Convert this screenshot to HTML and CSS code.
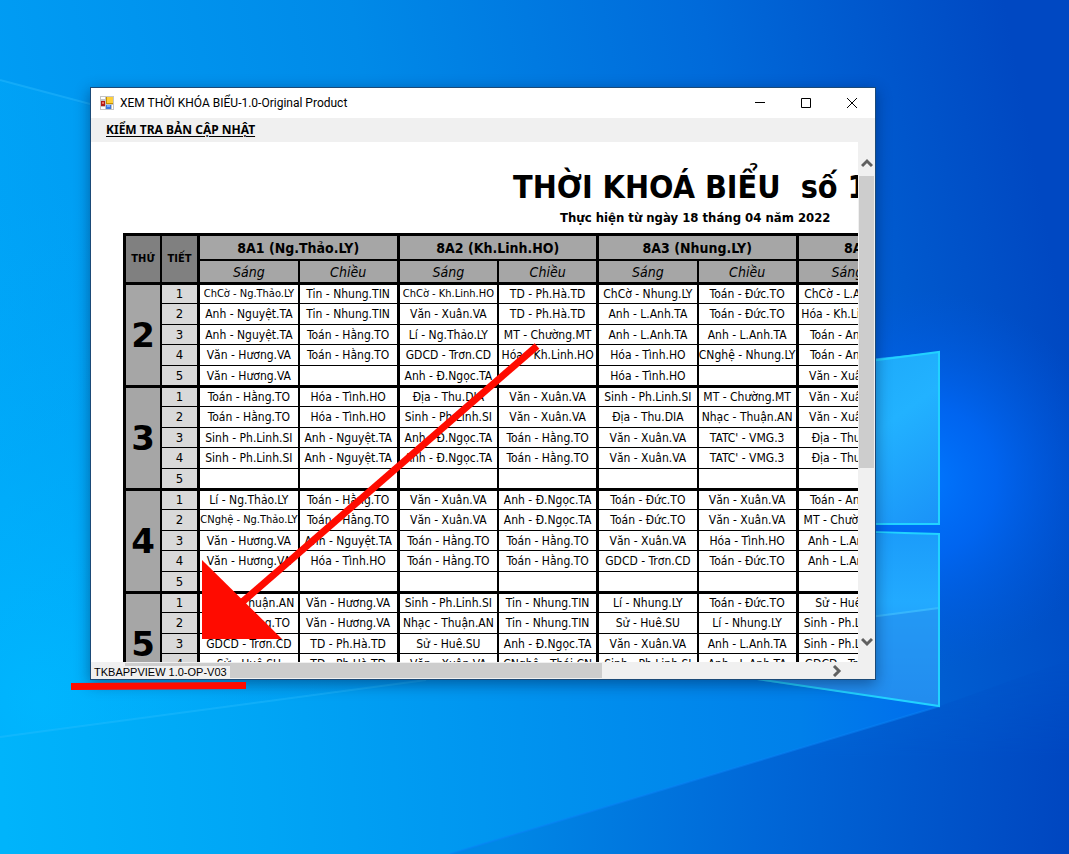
FILE: index.html
```html
<!DOCTYPE html>
<html lang="vi">
<head>
<meta charset="utf-8">
<title>XEM THỜI KHÓA BIỂU-1.0-Original Product</title>
<link rel="stylesheet" href="styles.css">
</head>
<body>
<div class="desktop">
  <svg class="wallpaper" viewBox="0 0 1069 854" preserveAspectRatio="none" aria-hidden="true">
    <defs>
      <linearGradient id="base" x1="0" y1="0.55" x2="1" y2="0.4">
        <stop offset="0" stop-color="#00a0f6"/><stop offset="0.4" stop-color="#008ae8"/><stop offset="0.72" stop-color="#006ada"/><stop offset="1" stop-color="#0048c2"/>
      </linearGradient>
      <radialGradient id="lowleft" gradientUnits="userSpaceOnUse" cx="40" cy="700" r="520">
        <stop offset="0" stop-color="#00b8ff" stop-opacity="0.9"/><stop offset="1" stop-color="#00a4f6" stop-opacity="0"/>
      </radialGradient>
      <radialGradient id="glow" gradientUnits="userSpaceOnUse" cx="920" cy="480" r="190">
        <stop offset="0" stop-color="#0078ff"/><stop offset="0.4" stop-color="#0068f8" stop-opacity="0.8"/><stop offset="1" stop-color="#0058e0" stop-opacity="0"/>
      </radialGradient>
      <linearGradient id="floor" gradientUnits="userSpaceOnUse" x1="0" y1="760" x2="940" y2="706">
        <stop offset="0" stop-color="#00b4fb"/><stop offset="0.28" stop-color="#00a5f5"/><stop offset="0.6" stop-color="#0090ee"/><stop offset="0.85" stop-color="#0080ea"/><stop offset="1" stop-color="#006cec"/>
      </linearGradient>
      <linearGradient id="wedge" gradientUnits="userSpaceOnUse" x1="500" y1="800" x2="1069" y2="830">
        <stop offset="0" stop-color="#0088e6"/><stop offset="0.45" stop-color="#0068d8"/><stop offset="1" stop-color="#0046c0"/>
      </linearGradient>
      <linearGradient id="wedgefade" x1="0" y1="0" x2="0" y2="1">
        <stop offset="0" stop-color="#fff" stop-opacity="0"/><stop offset="0.5" stop-color="#fff"/>
      </linearGradient>
      <mask id="wedgemask"><rect x="440" y="660" width="629" height="194" fill="url(#wedgefade)"/></mask>
      <linearGradient id="pane" x1="0" y1="0" x2="1" y2="1">
        <stop offset="0" stop-color="#179ef2"/><stop offset="0.6" stop-color="#22b2ff"/><stop offset="1" stop-color="#1a92f8"/>
      </linearGradient>
      <linearGradient id="pane2" x1="0" y1="0" x2="0" y2="1">
        <stop offset="0" stop-color="#1b9cfa"/><stop offset="0.4" stop-color="#22aaff"/><stop offset="1" stop-color="#2088f0"/>
      </linearGradient>
      <linearGradient id="beam" x1="0" y1="0" x2="1" y2="0">
        <stop offset="0" stop-color="#00b8ff" stop-opacity="0.5"/><stop offset="1" stop-color="#0090f0" stop-opacity="0.1"/>
      </linearGradient>
    </defs>
    <rect width="1069" height="854" fill="url(#base)"/>
    <rect width="1069" height="854" fill="url(#lowleft)"/>
    <path d="M0 80 L870 330 L870 620 L0 738Z" fill="url(#beam)" opacity="0.4"/>
    <path d="M0 737 L426 680 L520 640 L940 706 L450 854 L0 854Z" fill="url(#floor)"/>
    <path d="M0 737 L426 680" stroke="#30c0ff" stroke-width="2" opacity="0.35"/>
    <path d="M0 80 L120 112" stroke="#30c0ff" stroke-width="2" opacity="0.4"/>
    <path d="M940 706 L1069 660 L1069 854 L450 854Z" fill="url(#wedge)" mask="url(#wedgemask)"/>
    <path d="M940 706 L450 854" stroke="#0a84f6" stroke-width="2" opacity="0.5"/>
    <rect width="1069" height="854" fill="url(#glow)"/>
    <path d="M700 376 L939 352 L939 524 L700 524Z" fill="url(#pane)"/>
    <path d="M700 532 L939 534 L939 706 L700 672Z" fill="url(#pane2)"/>
    <path d="M875 616 L939 608 L939 706 L700 672Z" fill="#2590ee" opacity="0.6"/>
    <path d="M870 617 L939 608" stroke="#40c0ff" stroke-width="2" opacity="0.7"/>
    <g fill="none" stroke="#22d2ff" stroke-width="2">
      <path d="M870 361 L939 352 L939 524 L870 524"/>
      <path d="M870 532 L939 534 L939 706 L750 678"/>
    </g>
  </svg>

  <main class="window">
    <header class="titlebar">
      <svg class="app-icon" viewBox="0 0 14 14" aria-hidden="true">
        <rect width="14" height="14" fill="#c4c4c4"/><path d="M1 1H5V3H1ZM1 11H5V13H1ZM12 9H13V13H12Z" fill="#fff"/>
        <rect x="6" y="1" width="7" height="7" fill="#c49000"/><rect x="7" y="1" width="6" height="6" fill="#ffcf38"/>
        <rect x="1" y="5" width="4" height="5" fill="#b01c18"/><rect x="2" y="6" width="2" height="2" fill="#f07060"/>
        <rect x="6" y="9" width="5" height="4" fill="#3a78e0"/><rect x="7" y="9" width="3" height="2" fill="#78aaff"/>
      </svg>
      <h1 class="caption">XEM THỜI KHÓA BIỂU-1.0-Original Product</h1>
      <button class="win-btn" aria-label="Minimize"><svg viewBox="0 0 10 10"><path d="M0 4.5H10"/></svg></button>
      <button class="win-btn" aria-label="Maximize"><svg viewBox="0 0 10 10"><path d="M.5 .5H9.5V9.5H.5Z"/></svg></button>
      <button class="win-btn" aria-label="Close"><svg viewBox="0 0 10 10"><path d="M0 0L10 10M10 0L0 10"/></svg></button>
    </header>
    <nav class="menubar"><a href="#update">KIỂM TRA BẢN CẬP NHẬT</a></nav>
    <div class="content">
      <section class="sheet">
        <h2 class="title">THỜI KHOÁ BIỂU  số 1</h2>
        <p class="subtitle">Thực hiện từ ngày 18 tháng 04 năm 2022</p>
        <table class="timetable">
          <colgroup><col class="c-day"><col class="c-period"><col><col><col><col><col><col><col><col></colgroup>
          <thead>
            <tr class="classes"><th rowspan="2" class="corner">THỨ</th><th rowspan="2" class="corner period-head">TIẾT</th><th colspan="2">8A1 (Ng.Thảo.LY)</th><th colspan="2">8A2 (Kh.Linh.HO)</th><th colspan="2">8A3 (Nhung.LY)</th><th colspan="2">8A4 (L.Anh.TA)</th></tr>
            <tr class="sessions"><th>Sáng</th><th>Chiều</th><th>Sáng</th><th>Chiều</th><th>Sáng</th><th>Chiều</th><th>Sáng</th><th>Chiều</th></tr>
          </thead>
          <tbody>
            <tr><th rowspan="5" class="day">2</th><th>1</th><td class="tight">ChCờ - Ng.Thảo.LY</td><td>Tin - Nhung.TIN</td><td class="tight">ChCờ - Kh.Linh.HO</td><td>TD - Ph.Hà.TD</td><td>ChCờ - Nhung.LY</td><td>Toán - Đức.TO</td><td>ChCờ - L.Anh.TA</td><td></td></tr>
            <tr><th>2</th><td>Anh - Nguyệt.TA</td><td>Tin - Nhung.TIN</td><td>Văn - Xuân.VA</td><td>TD - Ph.Hà.TD</td><td>Anh - L.Anh.TA</td><td>Toán - Đức.TO</td><td>Hóa - Kh.Linh.HO</td><td></td></tr>
            <tr><th>3</th><td>Anh - Nguyệt.TA</td><td>Toán - Hằng.TO</td><td>Lí - Ng.Thảo.LY</td><td>MT - Chường.MT</td><td>Anh - L.Anh.TA</td><td>Anh - L.Anh.TA</td><td>Toán - Anh.TO</td><td></td></tr>
            <tr><th>4</th><td>Văn - Hương.VA</td><td>Toán - Hằng.TO</td><td>GDCD - Trơn.CD</td><td>Hóa - Kh.Linh.HO</td><td>Hóa - Tình.HO</td><td>CNghệ - Nhung.LY</td><td>Toán - Anh.TO</td><td></td></tr>
            <tr><th>5</th><td>Văn - Hương.VA</td><td></td><td>Anh - Đ.Ngọc.TA</td><td></td><td>Hóa - Tình.HO</td><td></td><td>Văn - Xuân.VA</td><td></td></tr>
          </tbody>
          <tbody>
            <tr><th rowspan="5" class="day">3</th><th>1</th><td>Toán - Hằng.TO</td><td>Hóa - Tình.HO</td><td>Địa - Thu.DIA</td><td>Văn - Xuân.VA</td><td>Sinh - Ph.Linh.SI</td><td>MT - Chường.MT</td><td>Văn - Xuân.VA</td><td></td></tr>
            <tr><th>2</th><td>Toán - Hằng.TO</td><td>Hóa - Tình.HO</td><td>Sinh - Ph.Linh.SI</td><td>Văn - Xuân.VA</td><td>Địa - Thu.DIA</td><td>Nhạc - Thuận.AN</td><td>Văn - Xuân.VA</td><td></td></tr>
            <tr><th>3</th><td>Sinh - Ph.Linh.SI</td><td>Anh - Nguyệt.TA</td><td>Anh - Đ.Ngọc.TA</td><td>Toán - Hằng.TO</td><td>Văn - Xuân.VA</td><td>TATC' - VMG.3</td><td>Địa - Thu.DIA</td><td></td></tr>
            <tr><th>4</th><td>Sinh - Ph.Linh.SI</td><td>Anh - Nguyệt.TA</td><td>Anh - Đ.Ngọc.TA</td><td>Toán - Hằng.TO</td><td>Văn - Xuân.VA</td><td>TATC' - VMG.3</td><td>Địa - Thu.DIA</td><td></td></tr>
            <tr><th>5</th><td></td><td></td><td></td><td></td><td></td><td></td><td></td><td></td></tr>
          </tbody>
          <tbody>
            <tr><th rowspan="5" class="day">4</th><th>1</th><td>Lí - Ng.Thảo.LY</td><td>Toán - Hằng.TO</td><td>Văn - Xuân.VA</td><td>Anh - Đ.Ngọc.TA</td><td>Toán - Đức.TO</td><td>Văn - Xuân.VA</td><td>Toán - Anh.TO</td><td></td></tr>
            <tr><th>2</th><td class="tight">CNghệ - Ng.Thảo.LY</td><td>Toán - Hằng.TO</td><td>Văn - Xuân.VA</td><td>Anh - Đ.Ngọc.TA</td><td>Toán - Đức.TO</td><td>Văn - Xuân.VA</td><td>MT - Chường.MT</td><td></td></tr>
            <tr><th>3</th><td>Văn - Hương.VA</td><td>Anh - Nguyệt.TA</td><td>Toán - Hằng.TO</td><td>Toán - Hằng.TO</td><td>Văn - Xuân.VA</td><td>Hóa - Tình.HO</td><td>Anh - L.Anh.TA</td><td></td></tr>
            <tr><th>4</th><td>Văn - Hương.VA</td><td>Hóa - Tình.HO</td><td>Toán - Hằng.TO</td><td>Toán - Hằng.TO</td><td>GDCD - Trơn.CD</td><td>Toán - Đức.TO</td><td>Anh - L.Anh.TA</td><td></td></tr>
            <tr><th>5</th><td></td><td></td><td></td><td></td><td></td><td></td><td></td><td></td></tr>
          </tbody>
          <tbody>
            <tr><th rowspan="5" class="day">5</th><th>1</th><td>Nhạc - Thuận.AN</td><td>Văn - Hương.VA</td><td>Sinh - Ph.Linh.SI</td><td>Tin - Nhung.TIN</td><td>Lí - Nhung.LY</td><td>Toán - Đức.TO</td><td>Sử - Huê.SU</td><td></td></tr>
            <tr><th>2</th><td>Toán - Hằng.TO</td><td>Văn - Hương.VA</td><td>Nhạc - Thuận.AN</td><td>Tin - Nhung.TIN</td><td>Sử - Huê.SU</td><td>Lí - Nhung.LY</td><td>Sinh - Ph.Linh.SI</td><td></td></tr>
            <tr><th>3</th><td>GDCD - Trơn.CD</td><td>TD - Ph.Hà.TD</td><td>Sử - Huê.SU</td><td>Anh - Đ.Ngọc.TA</td><td>Văn - Xuân.VA</td><td>Anh - L.Anh.TA</td><td>Sinh - Ph.Linh.SI</td><td></td></tr>
            <tr><th>4</th><td>Sử - Huê.SU</td><td>TD - Ph.Hà.TD</td><td>Văn - Xuân.VA</td><td>CNghệ - Thái.CN</td><td>Sinh - Ph.Linh.SI</td><td>Anh - L.Anh.TA</td><td>GDCD - Trơn.CD</td><td></td></tr>
            <tr><th>5</th><td></td><td></td><td></td><td></td><td></td><td></td><td></td><td></td></tr>
          </tbody>
        </table>
      </section>
      <div class="vscroll">
        <button class="arrow" aria-label="Scroll up"><svg viewBox="0 0 12 12"><path d="M1 8L6 3L11 8"/></svg></button>
        <div class="vtrack"><div class="vthumb"></div></div>
        <button class="arrow" aria-label="Scroll down"><svg viewBox="0 0 12 12"><path d="M1 4L6 9L11 4"/></svg></button>
      </div>
      <div class="hscroll">
        <div class="htrack"><div class="hthumb"></div></div>
        <button class="arrow" aria-label="Scroll right"><svg viewBox="0 0 12 12"><path d="M4 1L9 6L4 11"/></svg></button>
      </div>
    </div>
    <div class="version">TKBAPPVIEW 1.0-OP-V03</div>
  </main>

  <svg class="annotation" width="480" height="360" viewBox="0 0 480 360" aria-hidden="true">
    <path d="M467 6L170 264" stroke="#ff0b00" stroke-width="7"/>
    <path d="M132 220V299H212Z" fill="#ff0b00"/>
    <path d="M1 343L176 342V349L1 350Z" fill="#ff0b00"/>
  </svg>
</div>
</body>
</html>
```
FILE: styles.css
```css
* { box-sizing: border-box; }
body { margin: 0; font-family: "DejaVu Sans Condensed", "Noto Sans", sans-serif; color: #000; }
button { border: 0; padding: 0; background: none; display: flex; align-items: center; justify-content: center; }

.desktop { position: relative; display: flex; height: 100vh; min-height: 500px; padding: 87px 193px 174px 90px; overflow: hidden; background: #0084e4; }
.wallpaper { position: absolute; inset: 0; width: 100%; height: 100%; }
.annotation { position: absolute; left: 70px; top: 340px; }

.window { position: relative; flex: 1; min-width: 0; display: flex; flex-direction: column; border: 1px solid #1b4a78; background: #fff; box-shadow: 0 4px 14px rgba(0, 20, 60, 0.45); }
.titlebar { display: flex; align-items: center; flex: none; height: 30px; padding-left: 9px; background: #fff; }
.app-icon { width: 14px; height: 14px; }
.caption { flex: 1; margin: 0 0 0 6px; font: 400 12px/16px Roboto, "Noto Sans", sans-serif; white-space: nowrap; }
.win-btn { width: 46px; height: 30px; }
.win-btn svg { width: 10px; height: 10px; fill: none; stroke: #000; stroke-width: 1; overflow: visible; }
.menubar { flex: none; height: 24px; padding-left: 15px; background: #f0f0f0; font: 700 12px/24px "Noto Sans", sans-serif; }
.menubar a { color: #000; text-underline-offset: 2px; }

.content { flex: 1; min-height: 0; display: grid; grid-template-columns: minmax(0, 1fr) 17px; grid-template-rows: minmax(0, 1fr) 17px; background: #f0f0f0; }
.sheet { overflow: hidden; background: #fff; padding: 23px 0 0 32px; }
.title { margin: 0; padding-left: 390px; font-size: 32px; line-height: 44px; white-space: pre; }
.subtitle { margin: 0; padding-left: 437px; font-size: 13px; line-height: 18px; font-weight: 700; white-space: nowrap; }

.timetable { width: 875px; margin-top: 6px; table-layout: fixed; border-collapse: separate; border-spacing: 0; border: solid #000; border-width: 3px 0 0 3px; font-size: 12px; line-height: 16px; }
.c-day { width: 36px; }
.c-period { width: 38px; }
.timetable th, .timetable td { height: 20px; padding: 0; border: solid #000; border-width: 0 2px 1px 0; text-align: center; white-space: nowrap; overflow: hidden; }
.timetable td { background: #fff; }
.timetable td:nth-last-child(odd), .timetable tbody th, .timetable .classes th, .timetable .sessions th:nth-child(even) { border-right-width: 3px; }
.timetable tbody th { background: #d9d9d9; font-size: 13px; font-weight: 400; }
.timetable tbody tr:first-child > * { height: 19px; }
.timetable tbody tr:nth-child(even) > * { height: 21px; }
.timetable tbody tr:last-child > * { height: 22px; border-bottom-width: 3px; }
.timetable tbody tr:first-child > .day { height: auto; background: #a6a6a6; border-right-width: 2px; border-bottom-width: 3px; font-family: "DejaVu Sans", sans-serif; font-size: 34px; line-height: 40px; font-weight: 700; }
.timetable .classes th { height: 25px; background: #a6a6a6; border-bottom-width: 2px; font-size: 14px; }
.timetable .sessions th { height: 24px; background: #a6a6a6; border-bottom-width: 3px; font-size: 14px; font-weight: 400; font-style: italic; }
.timetable .classes .corner { background: #808080; border-right-width: 2px; border-bottom-width: 3px; font-size: 11px; }
.timetable .classes .period-head { border-right-width: 3px; }
.timetable .tight { font-size: 11px; }

.arrow svg { width: 12px; height: 12px; fill: none; stroke: #606060; stroke-width: 3; }
.vscroll { display: flex; flex-direction: column; padding: 13px 1px; }
.vscroll .arrow { height: 17px; }
.vtrack { flex: 1; padding-top: 4px; }
.vthumb { height: 64%; background: #cdcdcd; }
.hscroll { grid-column: 1 / -1; display: flex; padding: 1px 31px 1px 34px; }
.hscroll .arrow { width: 17px; }
.htrack { flex: 1; }
.hthumb { width: 68%; height: 100%; background: #cdcdcd; }
.version { position: absolute; left: 1px; bottom: 0; padding: 0 3px 0 2px; background: #f0f0f0; font: 11px/13px "Liberation Sans", Arial, sans-serif; white-space: nowrap; }
```
